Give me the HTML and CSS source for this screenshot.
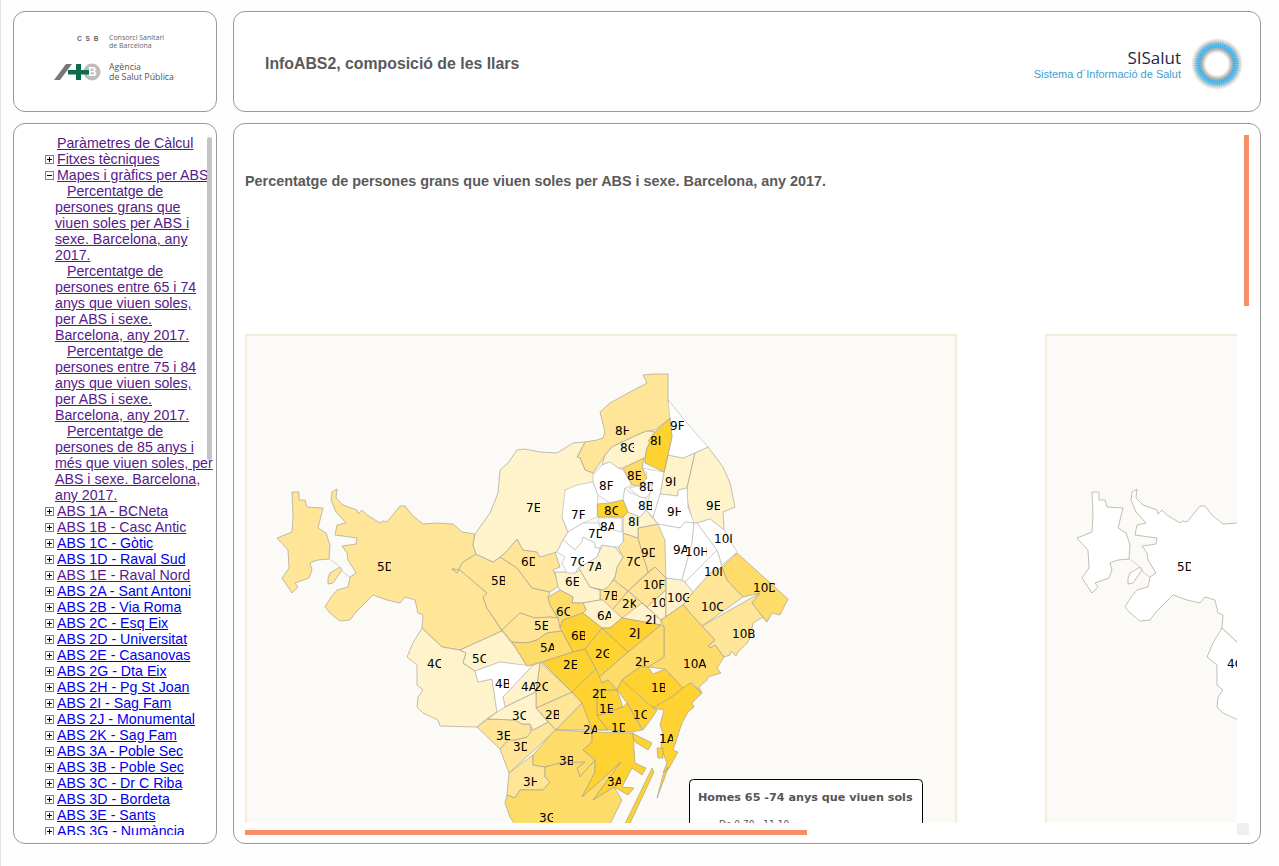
FILE: index.html
```html
<!DOCTYPE html>
<html lang="ca">
<head>
  <meta charset="UTF-8" />
  <title>InfoABS2, composició de les llars</title>
  <link rel="stylesheet" href="styles.css">
</head>
<body>

<svg class="defs" width="0" height="0">
  <symbol id="plus" viewBox="0 0 9 9">
    <rect x="0.5" y="0.5" width="8" height="8" fill="#fff" stroke="#808080"/>
    <path d="M2 4.5h5M4.5 2v5" stroke="#000" fill="none"/>
  </symbol>
  <symbol id="minus" viewBox="0 0 9 9">
    <rect x="0.5" y="0.5" width="8" height="8" fill="#fff" stroke="#808080"/>
    <path d="M2 4.5h5" stroke="#000" fill="none"/>
  </symbol>
</svg>

<div class="page">

  <div class="box logos">
    <svg width="202" height="99" viewBox="14 12 202 99">
      <text class="csb" x="77" y="41">C S B</text>
      <text class="csb-name" x="109" y="40">Consorci Sanitari</text>
      <text class="csb-name" x="109" y="48">de Barcelona</text>
      <polygon points="54,80 66,64 72,64 60,80" fill="#777"/>
      <circle cx="92" cy="72" r="8.5" fill="#bdbdbd"/>
      <text class="asp-b" x="88" y="76">B</text>
      <path d="M76 64h5v6h8v4.500h-8v5.500h-5v-5.500h-8v-4.500h8z" fill="#0d6b50"/>
      <text class="asp" x="109" y="70">Agència</text>
      <text class="asp" x="109" y="79.500">de Salut Pública</text>
    </svg>
  </div>

  <div class="box head">
    <h1>InfoABS2, composició de les llars</h1>
    <div class="sisalut">
      <div class="sisalut-text">
        <div class="sisalut-name">SISalut</div>
        <div class="sisalut-sub">Sistema d´Informació de Salut</div>
      </div>
      <svg width="56" height="56" viewBox="0 0 56 56">
        <defs>
          <radialGradient id="glow">
            <stop offset="0.42" stop-color="#fff"/>
            <stop offset="0.58" stop-color="#b0b0b0"/>
            <stop offset="0.68" stop-color="#3db3e6"/>
            <stop offset="0.78" stop-color="#44b6e8"/>
            <stop offset="0.86" stop-color="#c4c4c4"/>
            <stop offset="1" stop-color="#fff"/>
          </radialGradient>
        </defs>
        <circle cx="28" cy="28" r="26" fill="url(#glow)"/>
        <circle cx="28" cy="28" r="22" fill="none" stroke="#fff" stroke-width="8" stroke-dasharray="1 1.500" opacity="0.3"/>
      </svg>
    </div>
  </div>

  <div class="box side">
    <div class="tree">
      <div class="row"><a class="seen" href="#">Paràmetres de Càlcul</a></div>
      <div class="row"><svg class="tog"><use href="#plus"/></svg><a class="seen" href="#">Fitxes tècniques</a></div>
      <div class="row"><svg class="tog"><use href="#minus"/></svg><a class="seen" href="#">Mapes i gràfics per ABS</a></div>
      <div class="sub"><a class="seen" href="#">Percentatge de persones grans que viuen soles per ABS i sexe. Barcelona, any 2017.</a></div>
      <div class="sub"><a class="seen" href="#">Percentatge de persones entre 65 i 74 anys que viuen soles, per ABS i sexe. Barcelona, any 2017.</a></div>
      <div class="sub"><a class="seen" href="#">Percentatge de persones entre 75 i 84 anys que viuen soles, per ABS i sexe. Barcelona, any 2017.</a></div>
      <div class="sub"><a class="seen" href="#">Percentatge de persones de 85 anys i més que viuen soles, per ABS i sexe. Barcelona, any 2017.</a></div>
      <div class="row"><svg class="tog"><use href="#plus"/></svg><a class="seen" href="#">ABS 1A - BCNeta</a></div>
      <div class="row"><svg class="tog"><use href="#plus"/></svg><a class="seen" href="#">ABS 1B - Casc Antic</a></div>
      <div class="row"><svg class="tog"><use href="#plus"/></svg><a href="#">ABS 1C - Gòtic</a></div>
      <div class="row"><svg class="tog"><use href="#plus"/></svg><a href="#">ABS 1D - Raval Sud</a></div>
      <div class="row"><svg class="tog"><use href="#plus"/></svg><a class="seen" href="#">ABS 1E - Raval Nord</a></div>
      <div class="row"><svg class="tog"><use href="#plus"/></svg><a href="#">ABS 2A - Sant Antoni</a></div>
      <div class="row"><svg class="tog"><use href="#plus"/></svg><a href="#">ABS 2B - Via Roma</a></div>
      <div class="row"><svg class="tog"><use href="#plus"/></svg><a href="#">ABS 2C - Esq Eix</a></div>
      <div class="row"><svg class="tog"><use href="#plus"/></svg><a href="#">ABS 2D - Universitat</a></div>
      <div class="row"><svg class="tog"><use href="#plus"/></svg><a href="#">ABS 2E - Casanovas</a></div>
      <div class="row"><svg class="tog"><use href="#plus"/></svg><a href="#">ABS 2G - Dta Eix</a></div>
      <div class="row"><svg class="tog"><use href="#plus"/></svg><a href="#">ABS 2H - Pg St Joan</a></div>
      <div class="row"><svg class="tog"><use href="#plus"/></svg><a href="#">ABS 2I - Sag Fam</a></div>
      <div class="row"><svg class="tog"><use href="#plus"/></svg><a href="#">ABS 2J - Monumental</a></div>
      <div class="row"><svg class="tog"><use href="#plus"/></svg><a href="#">ABS 2K - Sag Fam</a></div>
      <div class="row"><svg class="tog"><use href="#plus"/></svg><a href="#">ABS 3A - Poble Sec</a></div>
      <div class="row"><svg class="tog"><use href="#plus"/></svg><a href="#">ABS 3B - Poble Sec</a></div>
      <div class="row"><svg class="tog"><use href="#plus"/></svg><a href="#">ABS 3C - Dr C Riba</a></div>
      <div class="row"><svg class="tog"><use href="#plus"/></svg><a href="#">ABS 3D - Bordeta</a></div>
      <div class="row"><svg class="tog"><use href="#plus"/></svg><a href="#">ABS 3E - Sants</a></div>
      <div class="row"><svg class="tog"><use href="#plus"/></svg><a href="#">ABS 3G - Numància</a></div>
    </div>
    <div class="side-thumb"></div>
  </div>

  <div class="box main">
    <div class="scroll">
      <h3>Percentatge de persones grans que viuen soles per ABS i sexe. Barcelona, any 2017.</h3>
      <div class="maps">

        <svg class="map" width="712" height="520" viewBox="245 334 712 520">
          <g class="c2">
            <polygon id="west" points="292,492 299,492 299,500 305,500 307,507 323,508 320,520 318,528 326,533 330,545 329,559 318,560 312,562 310,563 312,570 309,578 295,583 298,587 292,593 282,578 289,568 288,550 277,538 292,532 293,517"/>
            <polygon id="isle" points="328,578 330,573 340,567 342,570 333,583 328,584"/>
            <polygon id="d5" points="337,489 332,492 331,500 336,512 346,523 337,525 335,535 357,538 356,544 342,546 347,553 348,560 356,573 350,577 348,587 337,590 331,597 325,607 330,613 340,621 350,620 356,612 373,595 387,600 400,603 405,597 415,600 418,613 423,615 422,628 442,647 460,650 502,631 487,608 483,597 487,593 460,570 452,569 457,573 462,563 476,554 473,545 475,534 462,532 453,524 437,523 423,524 412,515 405,506 400,506 387,522 383,521 380,523 367,515 362,510 358,514 357,510 343,505 336,498"/>
            <polygon points="452,569 460,570 487,593 483,597 487,608 502,630 520,613 535,618 550,617 558,618 550,605 548,597 550,592 532,588 517,568 508,562 500,557 493,562 476,554 462,563 457,573"/>
            <polygon points="500,557 505,553 517,539 523,550 537,552 555,552 560,567 553,570 560,585 550,592 532,588 517,568 508,562"/>
            <polygon points="643,375 653,374 668,374 668,400 672,417 655,430 647,431 637,435 612,447 605,455 600,463 593,473 585,470 580,458 577,457 585,442 597,440 603,438 605,432 600,412 610,403 630,392 647,383"/>
            <polygon points="502,630 520,613 535,618 550,617 558,618 562,631 547,633 537,640 527,643 512,642"/>
            <polygon points="628,591 655,567 666,578 666,590 647,607"/>
            <polygon points="612,610 628,591 647,607 622,618"/>
            <polygon points="710,573 722,567 727,580 743,597 702,626 683,605 693,592"/>
            <polygon points="760,593 702,626 715,640 708,646 710,648 715,645 724,657 730,655 731,651 736,656 738,652 747,643 750,638 753,623 763,617 767,622 752,603"/>
            <polygon points="590,587 603,590 614,580 628,591 612,610 603,600 600,600 600,590"/>
            <polygon points="623,533 638,538 648,572 628,591 614,580 615,577 617,567 623,557 618,547 623,542"/>
            <polygon points="638,528 658,524 665,540 666,578 655,567 648,572 638,538"/>
            <polygon points="531,729 533,730 548,722 556,730 509,773 500,749 508,740 515,740 527,737"/>
            <polygon points="488,719 515,720 522,724 530,724 531,732 527,737 515,740 508,740 500,749 477,727"/>
            <polygon points="509,773 533,755 533,765 545,767 545,777 550,782 543,790 520,790 515,798 507,795"/>
            <polygon points="572,692 582,703 556,730 536,708"/>
            <polygon points="540,662 572,692 536,708 536,692"/>
          </g>
          <g class="c1">
            <polygon points="475,534 490,513 498,493 500,470 508,463 517,450 525,449 540,452 557,453 573,443 585,442 577,457 580,458 585,470 593,473 595,482 565,490 568,497 562,517 568,532 563,540 557,552 540,557 537,552 523,550 517,539 505,553 500,557 493,562 476,554 473,545"/>
            <polygon id="c4" points="422,628 442,647 460,650 466,653 463,663 475,671 478,682 492,679 497,712 488,718 477,727 440,726 438,720 423,713 417,707 418,697 423,690 417,685 417,665 407,657 413,643"/>
            <polygon points="460,650 466,653 463,663 475,671 500,662 527,666 515,647 502,631"/>
            <polygon points="532,666 540,662 536,692 505,707 503,697"/>
            <polygon points="497,712 505,707 536,692 536,708 548,722 533,730 530,724 522,724 515,720 488,719"/>
            <polygon points="555,572 565,572 575,573 580,570 590,587 600,590 600,600 583,603 572,603 573,597 560,590 558,587"/>
            <polygon points="586,610 583,603 600,600 603,600 622,618 610,628 602,628 583,613"/>
            <polygon points="578,568 587,563 597,557 602,545 615,547 623,557 617,567 615,577 608,587 603,590 590,587 580,570"/>
            <polygon points="605,455 612,447 637,435 647,431 655,432 647,448 645,458 623,468 618,468 610,462 602,465"/>
            <polygon points="668,455 683,458 695,453 687,488 678,490 678,496 660,494 664,472"/>
            <polygon points="708,447 723,467 730,483 735,507 723,512 724,530 710,519 697,523 693,523 687,500 687,488 695,453"/>
            <polygon points="623,517 628,512 640,517 646,510 658,524 638,528 638,538 623,533"/>
            <polygon points="622,618 642,603 661,620 661,625"/>
            <polygon points="647,607 666,590 666,618 661,620"/>
            <polygon points="666,578 682,580 685,582 693,592 683,605 661,620 666,618"/>
          </g>
          <g class="c0">
            <polygon points="475,671 500,662 532,666 503,697 505,707 497,712 492,679 478,682"/>
            <polygon points="565,490 577,485 593,482 598,495 597,517 583,523 568,532 562,517"/>
            <polygon points="568,532 583,523 598,523 620,520 623,533 623,542 618,547 615,547 602,545 600,548 595,548 595,543 583,537 582,542 575,550 563,540"/>
            <polygon points="598,518 622,518 622,532 600,527"/>
            <polygon points="563,540 575,550 582,542 583,537 595,543 595,548 600,548 597,557 587,563 578,568 575,573 567,573 562,563 565,557 557,552"/>
            <polygon points="593,475 602,465 610,462 618,468 623,470 632,485 625,488 623,500 610,503 598,495 593,482"/>
            <polygon points="668,400 687,423 708,447 683,458 668,455 664,472 672,437 670,418"/>
            <polygon points="660,494 678,496 678,490 687,488 688,507 694,523 685,522 680,528 658,524 653,517"/>
            <polygon points="642,468 664,472 660,494 653,517 646,510 650,493 653,483 642,483 647,473"/>
            <polygon points="629,488 638,486 647,488 653,483 650,493 646,498 640,497"/>
            <polygon points="629,492 640,497 646,498 646,510 640,517 628,512 623,500 625,488"/>
            <polygon points="658,524 680,528 685,522 694,523 692,543 682,580 666,578 665,540"/>
            <polygon points="694,523 697,523 717,550 685,582 682,580 692,543"/>
            <polygon points="697,523 710,519 724,530 737,552 722,565 717,550"/>
            <polygon points="717,550 722,567 710,573 693,592 685,582"/>
          </g>
          <g class="c3">
            <polygon points="542,662 527,666 512,642 527,643 537,640 547,633 562,631 573,652"/>
            <polygon points="548,597 560,590 573,597 572,603 583,603 586,610 583,613 563,620 560,628 558,618 550,605"/>
            <polygon points="623,468 644,458 642,468 647,478 640,486 632,485"/>
            <polygon points="737,553 722,567 727,580 743,597 760,593 752,603 767,622 772,613 780,615 788,599"/>
            <polygon points="661,620 683,605 702,626 715,640 708,646 710,648 715,645 724,657 717,668 721,673 708,677 707,680 699,687 702,693 692,683 683,688 665,669 648,667 664,657 664,627"/>
            <polygon points="661,625 664,627 664,657 648,667 640,667 623,679 617,690 608,680 602,683 598,678 628,652"/>
            <polygon points="582,703 608,730 556,730"/>
            <polygon points="555,730 592,732 592,742 583,750 595,760 580,777 577,768 585,762 572,763 560,763 545,767 533,765 533,755"/>
            <polygon points="505,803 507,795 515,798 520,790 543,790 550,782 545,777 545,767 560,763 585,762 577,768 580,777 595,760 595,772 582,797 621,762 593,800 614,787 622,800 606,832 520,832 510,817"/>
          </g>
          <g class="c4">
            <polygon points="560,628 563,620 583,613 602,628 585,649 573,652 562,631"/>
            <polygon points="542,662 573,652 585,649 596,669 572,692"/>
            <polygon points="585,649 602,628 628,652 598,678 596,669"/>
            <polygon points="602,628 610,628 622,618 661,625 628,652"/>
            <polygon points="655,432 670,418 672,437 664,472 645,463 645,458 647,448 650,443 648,441"/>
            <polygon points="597,504 610,503 623,500 628,512 623,517 598,517"/>
            <polygon points="617,690 623,679 640,667 648,667 653,674 665,669 683,688 673,696 655,708"/>
            <polygon points="683,688 690,683 702,693 692,703 694,707 688,712 682,723 673,750 678,752 668,770 663,773 667,763 661,748 663,733 660,725 664,710 653,708 673,696"/>
            <polygon points="617,690 622,680 653,708 657,710 652,718 643,730 642,728 627,703"/>
            <polygon points="597,690 617,690 623,707 597,716"/>
            <polygon points="572,692 596,669 602,683 608,680 617,690 597,690 597,716 608,730 592,730 582,703"/>
            <polygon points="597,716 623,707 627,703 642,730 632,732 608,730"/>
            <polygon points="592,732 633,733 635,763 646,768 642,775 632,768 622,787 634,788 628,795 614,787 593,800 621,762 582,797 595,772 595,760 583,750 592,742"/>
            <polygon points="632,733 652,743 648,750 635,742"/>
            <polygon points="657,748 663,748 663,758 658,758"/>
            <polygon points="652,768 654,772 626,832 621,832"/>
            <polygon points="668,767 665,777 657,798 663,775"/>
          </g>
          <polyline class="shore" points="329,559 338,565 343,572 350,577"/>

          <g class="labels">
            <svg x="377" y="559" width="14" height="14"><text y="11.500">5D</text></svg>
            <svg x="491" y="573" width="14" height="14"><text y="11.500">5B</text></svg>
            <svg x="521" y="554" width="14" height="14"><text y="11.500">6D</text></svg>
            <svg x="526" y="500" width="14" height="14"><text y="11.500">7E</text></svg>
            <svg x="615" y="423" width="14" height="14"><text y="11.500">8H</text></svg>
            <svg x="620" y="440" width="14" height="14"><text y="11.500">8G</text></svg>
            <svg x="650" y="433" width="14" height="14"><text y="11.500">8I</text></svg>
            <svg x="670" y="418" width="14" height="14"><text y="11.500">9F</text></svg>
            <svg x="627" y="468" width="14" height="14"><text y="11.500">8E</text></svg>
            <svg x="639" y="479" width="14" height="14"><text y="11.500">8D</text></svg>
            <svg x="599" y="478" width="14" height="14"><text y="11.500">8F</text></svg>
            <svg x="665" y="474" width="14" height="14"><text y="11.500">9I</text></svg>
            <svg x="706" y="498" width="14" height="14"><text y="11.500">9E</text></svg>
            <svg x="638" y="498" width="14" height="14"><text y="11.500">8B</text></svg>
            <svg x="667" y="504" width="14" height="14"><text y="11.500">9H</text></svg>
            <svg x="604" y="503" width="14" height="14"><text y="11.500">8C</text></svg>
            <svg x="571" y="507" width="14" height="14"><text y="11.500">7F</text></svg>
            <svg x="628" y="514" width="14" height="14"><text y="11.500">8I</text></svg>
            <svg x="600" y="519" width="14" height="14"><text y="11.500">8A</text></svg>
            <svg x="588" y="526" width="14" height="14"><text y="11.500">7D</text></svg>
            <svg x="714" y="531" width="22" height="14"><text y="11.500">10I</text></svg>
            <svg x="641" y="545" width="14" height="14"><text y="11.500">9D</text></svg>
            <svg x="673" y="542" width="14" height="14"><text y="11.500">9A</text></svg>
            <svg x="685" y="544" width="22" height="14"><text y="11.500">10H</text></svg>
            <svg x="570" y="554" width="14" height="14"><text y="11.500">7G</text></svg>
            <svg x="587" y="559" width="14" height="14"><text y="11.500">7A</text></svg>
            <svg x="626" y="554" width="14" height="14"><text y="11.500">7C</text></svg>
            <svg x="704" y="564" width="22" height="14"><text y="11.500">10I</text></svg>
            <svg x="565" y="574" width="14" height="14"><text y="11.500">6E</text></svg>
            <svg x="643" y="577" width="22" height="14"><text y="11.500">10F</text></svg>
            <svg x="753" y="580" width="22" height="14"><text y="11.500">10D</text></svg>
            <svg x="603" y="588" width="14" height="14"><text y="11.500">7B</text></svg>
            <svg x="667" y="590" width="22" height="14"><text y="11.500">10G</text></svg>
            <svg x="427" y="656" width="14" height="14"><text y="11.500">4C</text></svg>
            <svg x="472" y="651" width="14" height="14"><text y="11.500">5C</text></svg>
            <svg x="556" y="604" width="14" height="14"><text y="11.500">6C</text></svg>
            <svg x="597" y="608" width="14" height="14"><text y="11.500">6A</text></svg>
            <svg x="622" y="596" width="14" height="14"><text y="11.500">2K</text></svg>
            <svg x="651" y="595" width="14" height="14"><text y="11.500">10E</text></svg>
            <svg x="645" y="612" width="14" height="14"><text y="11.500">2I</text></svg>
            <svg x="701" y="599" width="22" height="14"><text y="11.500">10C</text></svg>
            <svg x="534" y="618" width="14" height="14"><text y="11.500">5E</text></svg>
            <svg x="571" y="628" width="14" height="14"><text y="11.500">6B</text></svg>
            <svg x="629" y="625" width="14" height="14"><text y="11.500">2J</text></svg>
            <svg x="732" y="626" width="23" height="14"><text y="11.500">10B</text></svg>
            <svg x="540" y="640" width="14" height="14"><text y="11.500">5A</text></svg>
            <svg x="595" y="646" width="14" height="14"><text y="11.500">2G</text></svg>
            <svg x="635" y="654" width="14" height="14"><text y="11.500">2H</text></svg>
            <svg x="563" y="657" width="14" height="14"><text y="11.500">2E</text></svg>
            <svg x="683" y="656" width="23" height="14"><text y="11.500">10A</text></svg>
            <svg x="495" y="676" width="14" height="14"><text y="11.500">4B</text></svg>
            <svg x="521" y="679" width="14" height="14"><text y="11.500">4A</text></svg>
            <svg x="534" y="679" width="14" height="14"><text y="11.500">2C</text></svg>
            <svg x="592" y="686" width="14" height="14"><text y="11.500">2D</text></svg>
            <svg x="651" y="680" width="14" height="14"><text y="11.500">1B</text></svg>
            <svg x="599" y="701" width="14" height="14"><text y="11.500">1E</text></svg>
            <svg x="545" y="707" width="14" height="14"><text y="11.500">2B</text></svg>
            <svg x="512" y="708" width="14" height="14"><text y="11.500">3C</text></svg>
            <svg x="633" y="707" width="14" height="14"><text y="11.500">1C</text></svg>
            <svg x="611" y="720" width="14" height="14"><text y="11.500">1D</text></svg>
            <svg x="583" y="722" width="14" height="14"><text y="11.500">2A</text></svg>
            <svg x="659" y="731" width="14" height="14"><text y="11.500">1A</text></svg>
            <svg x="496" y="728" width="14" height="14"><text y="11.500">3E</text></svg>
            <svg x="513" y="739" width="14" height="14"><text y="11.500">3D</text></svg>
            <svg x="559" y="753" width="14" height="14"><text y="11.500">3B</text></svg>
            <svg x="607" y="774" width="14" height="14"><text y="11.500">3A</text></svg>
            <svg x="523" y="774" width="14" height="14"><text y="11.500">3H</text></svg>
            <svg x="539" y="810" width="14" height="14"><text y="11.500">3G</text></svg>
          </g>

          <rect class="legend" x="689.500" y="779.500" width="233" height="70" rx="4"/>
          <text class="legend-title" x="698" y="801">Homes 65 -74 anys que viuen sols</text>
          <text class="legend-item" x="719" y="827">De 0.70 - 11.10</text>
        </svg>

        <svg class="map map-blank" width="712" height="520" viewBox="245 334 712 520">
          <use href="#west"/>
          <use href="#isle"/>
          <use href="#d5"/>
          <use href="#c4"/>
          <polyline class="shore" points="329,559 338,565 343,572 350,577"/>
          <g class="labels">
            <svg x="377" y="559" width="14" height="14"><text y="11.500">5D</text></svg>
            <svg x="427" y="656" width="14" height="14"><text y="11.500">4C</text></svg>
          </g>
        </svg>

      </div>
    </div>
    <div class="bar-v"></div>
    <div class="bar-h"></div>
    <div class="bar-corner"></div>
  </div>

</div>

</body>
</html>
```

FILE: styles.css
```css
html, body {
  margin: 0;
  height: 100%;
}

body {
  background: #fefefe;
  border-left: 1px solid #e2e2e2;
  font-family: "Liberation Sans", Arial, sans-serif;
}

.defs {
  position: absolute;
}

.page {
  display: grid;
  grid-template-columns: 204px 1028px;
  grid-template-rows: 101px 721px;
  gap: 11px 16px;
  padding: 11px 0 0 12px;
}

.box {
  border: 1px solid #999;
  border-radius: 12px;
  background: #fff;
  position: relative;
  overflow: hidden;
}

/* logos */
.logos svg {
  display: block;
}

.csb {
  font: bold 6.500px "Liberation Sans", sans-serif;
  fill: #666;
  letter-spacing: 1px;
}

.csb-name {
  font: 7px "Open Sans", sans-serif;
  fill: #666;
}

.asp {
  font: 8.800px "Open Sans", sans-serif;
  fill: #555;
}

.asp-b {
  font: bold 12px "Liberation Sans", sans-serif;
  fill: #fff;
}

/* header */
.head {
  display: flex;
  align-items: center;
  justify-content: space-between;
  padding: 4px 15px 0 31px;
}

h1 {
  margin: 0;
  font-size: 15.840px;
  font-weight: bold;
  color: #5a5a5a;
}

.sisalut {
  display: flex;
  align-items: center;
  gap: 8px;
}

.sisalut-text {
  text-align: right;
}

.sisalut-name {
  font: 17px/20px "Open Sans", sans-serif;
  color: #1c2742;
}

.sisalut-sub {
  font-size: 11px;
  line-height: 12px;
  color: #3c9fd0;
}

/* left tree */
.tree {
  height: 700px;
  margin-top: 11px;
  overflow: hidden;
  font-size: 14.200px;
  line-height: 16px;
}

.tree a {
  color: #0000ee;
}

.tree a.seen {
  color: #551a8b;
}

.row {
  display: flex;
  align-items: center;
  height: 16px;
  padding-left: 43px;
  white-space: nowrap;
}

.tog {
  width: 9px;
  height: 9px;
  margin-left: -12px;
  margin-right: 3px;
  flex: none;
}

.sub {
  padding-left: 41px;
  width: 160px;
  text-indent: 12px;
}

.side-thumb {
  position: absolute;
  left: 193px;
  top: 13px;
  width: 5px;
  height: 323px;
  border-radius: 3px;
  background: #c4c4c4;
}

/* main panel */
.main {
  padding: 11px 0 0 11px;
}

.scroll {
  width: 992px;
  height: 688px;
  overflow: hidden;
}

h3 {
  margin: 38px 0 145px;
  font-size: 14.400px;
  line-height: 16px;
  font-weight: bold;
  color: #5a5a5a;
}

.maps {
  display: flex;
  gap: 88px;
  width: 1512px;
}

.map {
  display: block;
  flex: none;
  background: #fbfaf6;
  box-shadow: inset 0 0 0 2px #f3eeda;
}

.map polygon {
  stroke: #a9a393;
  stroke-width: 0.700;
  stroke-linejoin: round;
}

.c0 { fill: #fff; }
.c0 polygon { stroke: #bdbdbd; }
.c1 { fill: #fff3cc; }
.c2 { fill: #fee598; }
.c3 { fill: #fedc6a; }
.c4 { fill: #fed230; }

.shore {
  fill: none;
  stroke: #c8c8c8;
  stroke-width: 0.800;
}

.map-blank use {
  fill: #fff;
  stroke: #c4c4c4;
  stroke-width: 0.800;
}

.labels text {
  font: 12px "DejaVu Sans", sans-serif;
  fill: #000;
}

.legend {
  fill: #fff;
  stroke: #000;
}

.legend-title {
  font: bold 11.200px "DejaVu Sans", sans-serif;
  fill: #555;
}

.legend-item {
  font: 9px "DejaVu Sans", sans-serif;
  fill: #555;
}

/* orange scrollbars */
.bar-v {
  position: absolute;
  right: 11px;
  top: 11px;
  width: 5px;
  height: 171px;
  background: #f78f65;
}

.bar-h {
  position: absolute;
  left: 11px;
  top: 706px;
  width: 562px;
  height: 5px;
  background: #f78f65;
}

.bar-corner {
  position: absolute;
  left: 1003px;
  top: 699px;
  width: 12px;
  height: 12px;
  background: #f0f0f0;
}
```
